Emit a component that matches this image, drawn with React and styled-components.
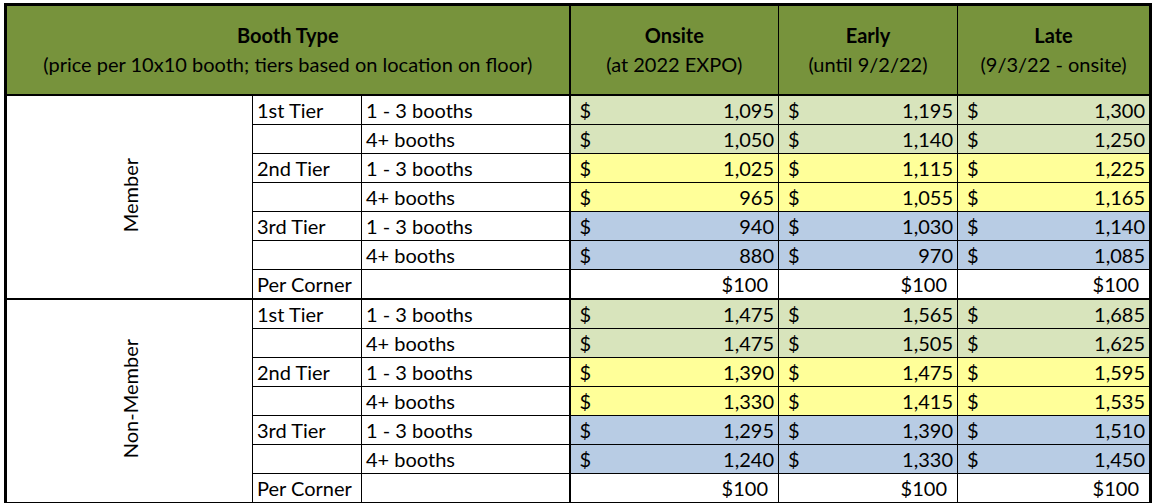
import styled, { createGlobalStyle } from 'styled-components';

const GlobalStyle = createGlobalStyle`
  body {
    margin: 0;
    background: #fff;
    font-family: Lato, "Liberation Sans", sans-serif;
  }
`;

const Sheet = styled.div`
  padding: 3px 0 0 4px;
`;

const Table = styled.table`
  border-collapse: collapse;
  table-layout: fixed;
  width: 1145px;
  border: 3px solid #000;
  font-size: 20px;
  color: #000;
`;

const HeadCell = styled.th`
  background: #77933c;
  border: 1px solid #000;
  border-left-width: ${(p) => (p.$thick ? '2px' : '1px')};
  height: 88px;
  padding: 0;
  text-align: center;
  vertical-align: middle;
  font-weight: 400;
  line-height: 29px;
  b {
    font-weight: 700;
  }
`;

const Row = styled.tr`
  height: 29px;
  &.groupStart td {
    border-top: 2px solid #000;
  }
`;

const GroupCell = styled.td`
  border: 1px solid #000;
  padding: 0;
  text-align: center;
  vertical-align: middle;
`;

const Vertical = styled.span`
  display: inline-block;
  writing-mode: vertical-rl;
  transform: rotate(180deg);
  line-height: 1;
`;

const Cell = styled.td`
  border: 1px solid #000;
  padding: 0 4px;
  white-space: nowrap;
  vertical-align: middle;
  line-height: 28px;
  background: ${(p) => p.$bg || '#fff'};
  border-left-width: ${(p) => (p.$thick ? '2px' : '1px')};
  text-align: ${(p) => p.$align || 'left'};
  padding-right: ${(p) => (p.$align === 'right' ? '10px' : '4px')};
`;

const Money = styled.div`
  display: flex;
  justify-content: space-between;
  padding-left: 5px;
`;

const tierColors = {
  '1st Tier': '#d8e4bc',
  '2nd Tier': '#ffff99',
  '3rd Tier': '#b8cce4',
};

const groups = [
  {
    name: 'Member',
    tiers: [
      ['1st Tier', ['1,095', '1,195', '1,300'], ['1,050', '1,140', '1,250']],
      ['2nd Tier', ['1,025', '1,115', '1,225'], ['965', '1,055', '1,165']],
      ['3rd Tier', ['940', '1,030', '1,140'], ['880', '970', '1,085']],
    ],
  },
  {
    name: 'Non-Member',
    tiers: [
      ['1st Tier', ['1,475', '1,565', '1,685'], ['1,475', '1,505', '1,625']],
      ['2nd Tier', ['1,390', '1,475', '1,595'], ['1,330', '1,415', '1,535']],
      ['3rd Tier', ['1,295', '1,390', '1,510'], ['1,240', '1,330', '1,450']],
    ],
  },
];

function PriceCells({ prices, bg }) {
  return prices.map((p, i) => (
    <Cell key={i} $bg={bg} $thick={i === 0}>
      <Money>
        <span>$</span>
        <span>{p}</span>
      </Money>
    </Cell>
  ));
}

function Group({ group }) {
  const rows = [];
  group.tiers.forEach(([tier, small, large], t) => {
    const bg = tierColors[tier];
    rows.push(
      <Row key={tier + 'a'} className={t === 0 ? 'groupStart' : undefined}>
        {t === 0 && (
          <GroupCell rowSpan={7}>
            <Vertical>{group.name}</Vertical>
          </GroupCell>
        )}
        <Cell>{tier}</Cell>
        <Cell>1 - 3 booths</Cell>
        <PriceCells prices={small} bg={bg} />
      </Row>
    );
    rows.push(
      <Row key={tier + 'b'}>
        <Cell />
        <Cell>4+ booths</Cell>
        <PriceCells prices={large} bg={bg} />
      </Row>
    );
  });
  rows.push(
    <Row key="corner">
      <Cell>Per Corner</Cell>
      <Cell />
      <Cell $align="right" $thick>$100</Cell>
      <Cell $align="right">$100</Cell>
      <Cell $align="right">$100</Cell>
    </Row>
  );
  return rows;
}

export default function App() {
  return (
    <Sheet>
      <GlobalStyle />
      <Table>
        <colgroup>
          <col style={{ width: 247 }} />
          <col style={{ width: 109 }} />
          <col style={{ width: 208 }} />
          <col style={{ width: 209 }} />
          <col style={{ width: 179 }} />
          <col style={{ width: 193 }} />
        </colgroup>
        <thead>
          <tr>
            <HeadCell colSpan={3}>
              <b>Booth Type</b>
              <br />
              (price per 10x10 booth; tiers based on location on floor)
            </HeadCell>
            <HeadCell $thick>
              <b>Onsite</b>
              <br />
              (at 2022 EXPO)
            </HeadCell>
            <HeadCell>
              <b>Early</b>
              <br />
              (until 9/2/22)
            </HeadCell>
            <HeadCell>
              <b>Late</b>
              <br />
              (9/3/22 - onsite)
            </HeadCell>
          </tr>
        </thead>
        <tbody>
          {groups.map((g) => (
            <Group key={g.name} group={g} />
          ))}
        </tbody>
      </Table>
    </Sheet>
  );
}
